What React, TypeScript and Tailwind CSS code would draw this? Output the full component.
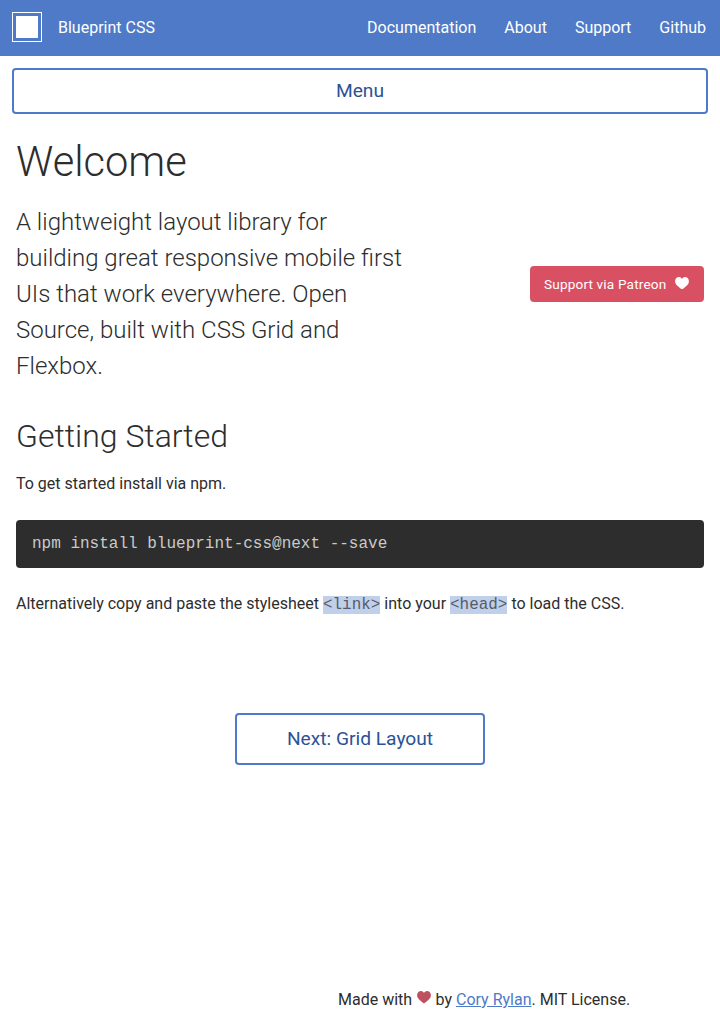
const Heart = ({ className }: { className: string }) => (
  <svg viewBox="0 0 14 12" preserveAspectRatio="none" className={className} fill="currentColor" aria-hidden="true">
    <path d="M7 12 C6.6 11.8 2 8.6 .7 6.5 C-.6 4.3 .1 .3 3.6 .1 C5.3 0 6.5 1 7 2 C7.5 1 8.7 0 10.4 .1 C13.9 .3 14.6 4.3 13.3 6.5 C12 8.6 7.4 11.8 7 12Z" />
  </svg>
);

const Code = ({ children }: { children: string }) => (
  <code className="bg-[#c0d0eb] font-['Liberation_Mono',monospace] text-[15.95px] leading-[18px] text-[#555c68]">{children}</code>
);

export default function App() {
  return (
    <div className="flex h-[1024px] flex-col bg-white font-[Roboto,sans-serif] text-base text-[#2d2d2d] antialiased">
      <header className="flex h-14 shrink-0 items-center justify-between bg-[#4e7ac7] pr-3.5 pl-3 text-white">
        <a className="flex items-center gap-4">
          <span className="mb-0.5 size-[30px] border border-white p-[3px]"><span className="block size-full bg-white" /></span>
          <span>Blueprint CSS</span>
        </a>
        <nav className="flex gap-7">
          <a>Documentation</a><a>About</a><a>Support</a><a>Github</a>
        </nav>
      </header>
      <button className="mx-3 mt-3 h-[46px] shrink-0 rounded border-2 border-[#4e7ac7] text-[19.2px] text-[#2b5297]">Menu</button>
      <main className="flex flex-col px-4">
        <h1 className="mt-5 text-[41.6px] leading-[56px] font-light">Welcome</h1>
        <section className="mt-3.5 flex items-center justify-between">
          <p className="w-[390px] text-2xl leading-9 font-light">A lightweight layout library for building great responsive mobile first UIs that work everywhere. Open Source, built with CSS Grid and Flexbox.</p>
          <a className="mb-5 flex h-9 w-[174px] items-center justify-between rounded bg-[#d95062] pr-[15px] pl-3.5 text-[13.6px] tracking-[0.16px] text-white"><span>Support via Patreon</span><Heart className="mb-0.5 h-[12.5px] w-3.5" /></a>
        </section>
        <h2 className="mt-8 text-[32px] leading-10 font-light">Getting Started</h2>
        <p className="mt-4 leading-6">To get started install via npm.</p>
        <pre className="mt-6 h-12 rounded bg-[#2d2d2d] px-4 font-['Liberation_Mono',monospace] text-base leading-[48px] text-[#cacaca]">npm install blueprint-css@next --save</pre>
        <p className="mt-6 leading-6">Alternatively copy and paste the stylesheet <Code>{'<link>'}</Code> into your <Code>{'<head>'}</Code> to load the CSS.</p>
        <a className="mt-[97px] flex h-[52px] w-[250px] items-center justify-center self-center rounded border-2 border-[#4e7ac7] text-[19.2px] text-[#2b5297]">Next: Grid Layout</a>
      </main>
      <footer className="mt-auto mb-3 ml-[338px] leading-6">Made with <Heart className="mr-px mb-[7px] ml-[0.5px] inline h-[12.5px] w-3.5 text-[#bd5160]" /> by <a className="text-[#4e7ac7] underline">Cory Rylan</a>. MIT License.</footer>
    </div>
  );
}
